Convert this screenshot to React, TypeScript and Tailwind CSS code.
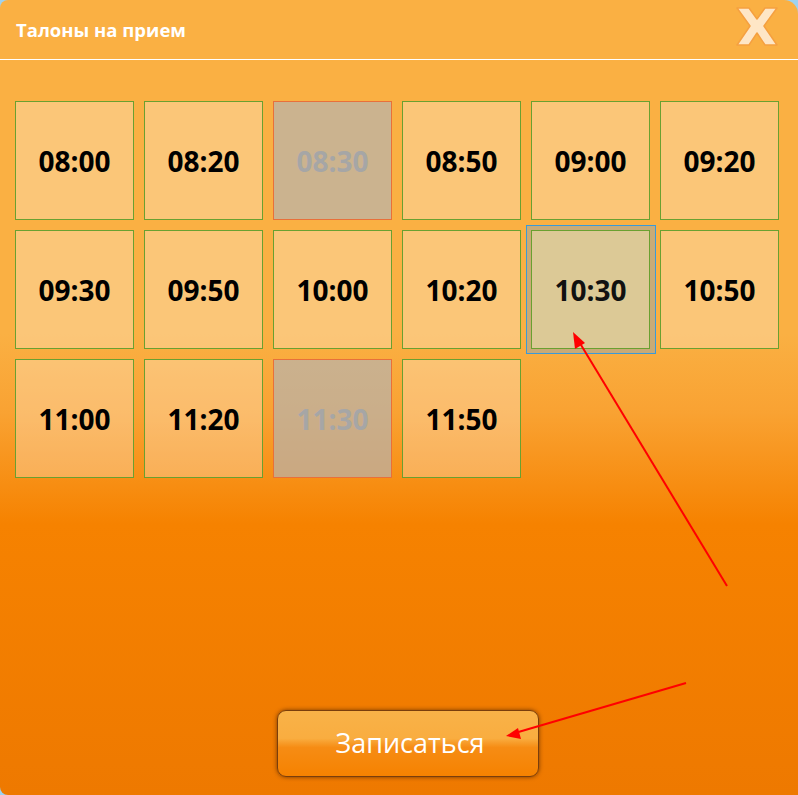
import React from 'react'

type Slot = { time: string; state?: 'disabled' | 'selected' }

const slots: Slot[] = [
  { time: '08:00' },
  { time: '08:20' },
  { time: '08:30', state: 'disabled' },
  { time: '08:50' },
  { time: '09:00' },
  { time: '09:20' },
  { time: '09:30' },
  { time: '09:50' },
  { time: '10:00' },
  { time: '10:20' },
  { time: '10:30', state: 'selected' },
  { time: '10:50' },
  { time: '11:00' },
  { time: '11:20' },
  { time: '11:30', state: 'disabled' },
  { time: '11:50' },
]

const font = { fontFamily: '"Open Sans", "Noto Sans", sans-serif' }

function SlotTile({ slot }: { slot: Slot }) {
  if (slot.state === 'disabled') {
    return (
      <div className="w-[119px] h-[119px] border border-[#e8703a] bg-[#b4b4b4]/[0.68] flex items-center justify-center">
        <span className="text-[28px] font-bold text-[#a6a6a6]">{slot.time}</span>
      </div>
    )
  }
  if (slot.state === 'selected') {
    return (
      <div className="relative w-[119px] h-[119px]">
        {/* рамка выделения */}
        <div className="absolute -left-[5px] -top-[5px] w-[130px] h-[129px] border border-[#3a9ad9] bg-[#b8aa88]/[0.75]" />
        <div className="relative w-[119px] h-[119px] border border-[#6aa030] bg-[#dcc996] flex items-center justify-center">
          <span className="text-[28px] font-bold text-[#111]">{slot.time}</span>
        </div>
      </div>
    )
  }
  return (
    <div className="w-[119px] h-[119px] border border-[#6aa030] bg-white/[0.28] flex items-center justify-center">
      <span className="text-[28px] font-bold text-black">{slot.time}</span>
    </div>
  )
}

export default function App() {
  return (
    <div className="w-[798px] h-[795px] bg-[#9ed2ef] relative overflow-hidden" style={font}>
      <div className="w-[798px] h-[795px] flex flex-col rounded-tl-[8px] rounded-tr-[14px] rounded-bl-[8px] overflow-hidden bg-[linear-gradient(to_bottom,#fab043_0%,#fab043_42%,#f9a232_52%,#f68200_66%,#ee7900_100%)]">
        {/* заголовок */}
        <div className="h-[59px] flex items-center justify-between pl-[16px] pr-[18px] shrink-0">
          <span className="text-[18.5px] font-bold text-white">Талоны на прием</span>
          <svg width="46" height="46" viewBox="0 0 46 46" className="-mt-[6px]">
            <path
              d="M3 4 H15 L23 15 L31 4 H43 L30 22 L43 41 H31 L23 29 L15 41 H3 L16 22 Z"
              fill="#fee6c6"
              stroke="#f5a040"
              strokeWidth="1.5"
              strokeLinejoin="round"
            />
          </svg>
        </div>
        <div className="h-px bg-white shrink-0" />

        {/* сетка талонов */}
        <div className="pt-[41px] pl-[15px] grid grid-cols-[repeat(6,119px)] gap-[10px]">
          {slots.map((s) => (
            <SlotTile key={s.time} slot={s} />
          ))}
        </div>

        <div className="flex-1" />

        {/* кнопка */}
        <div className="pl-[277px] pb-[18px]">
          <button className="w-[262px] h-[67px] rounded-[9px] border border-[#7a3e0c] shadow-[0_0_4px_rgba(90,40,0,0.8)] bg-[linear-gradient(to_bottom,#f9b248_0%,#f9ad40_42%,#f68c14_56%,#f68200_100%)] flex items-center justify-center">
            <span className="text-[27px] text-white pl-[4px]">Записаться</span>
          </button>
        </div>
      </div>

      {/* стрелки */}
      <svg className="absolute left-0 top-0 pointer-events-none" width="798" height="795">
        <line x1="727" y1="586" x2="578" y2="340" stroke="#f00" strokeWidth="2" />
        <polygon points="573,332 575,349 585,343" fill="#f00" />
        <line x1="686" y1="683" x2="515" y2="733" stroke="#f00" strokeWidth="2" />
        <polygon points="506,736 521,739 518,728" fill="#f00" />
      </svg>
    </div>
  )
}
